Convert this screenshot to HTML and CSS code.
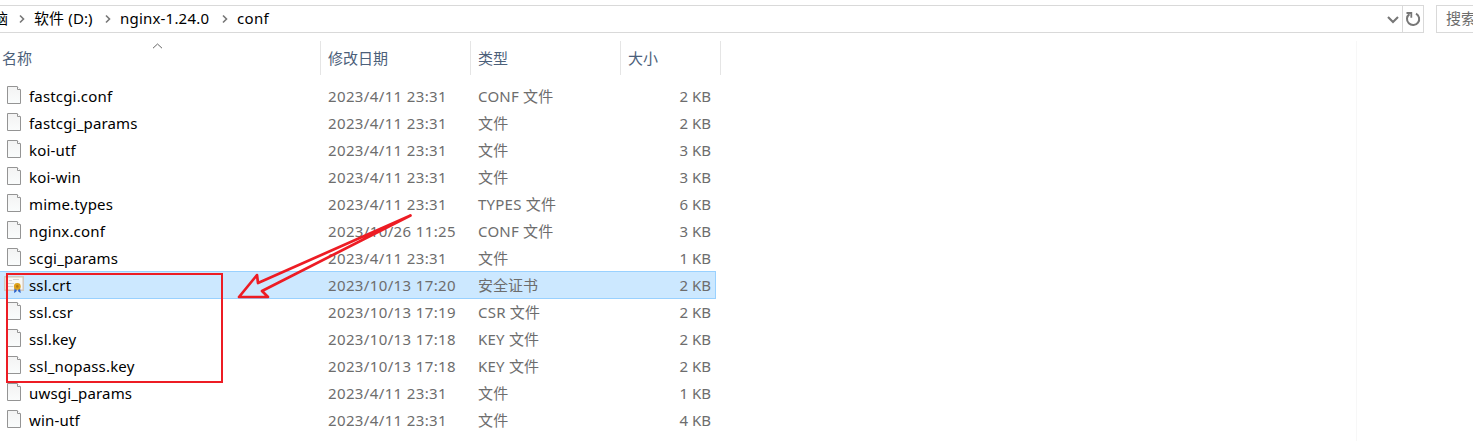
FILE: index.html
```html
<!DOCTYPE html>
<html lang="zh-CN">
<head>
<meta charset="utf-8">
<title>conf</title>
<link rel="stylesheet" href="styles.css">
</head>
<body>
<svg class="defs" width="0" height="0">
  <defs>
    <linearGradient id="paper" x2="0" y2="1"><stop offset="0" stop-color="#f3f3f3"/><stop offset="1" stop-color="#fafcfc"/></linearGradient>
    <symbol id="file" viewBox="0 0 16 20">
      <path d="M1.5 1.5H11L14.5 5V18.5H1.5Z" fill="url(#paper)" stroke="#949494"/>
      <path d="M11.5 1.5V4.5H14.5" fill="#fff" stroke="#949494"/>
    </symbol>
    <symbol id="cert" viewBox="0 0 20 20">
      <rect x=".8" y="2.8" width="18.4" height="13.4" fill="#f8f8f5" stroke="#d3c8bd" stroke-width="1.5"/>
      <path d="M5 6.5H8M9 5.5H15M4 9.5H10M4 12.5H9" stroke="#d0d3d5"/>
      <path d="M10.5 14L10 19L12.2 17.8L13.5 14.5ZM13.5 14.5L14.5 17.8L16.8 19L16 14Z" fill="#2f66cc"/>
      <circle cx="13.3" cy="12.4" r="3.4" fill="#dda119"/><circle cx="13.3" cy="12.4" r="1.3" fill="#b47a10"/>
    </symbol>
    <symbol id="chev" viewBox="0 0 8 10"><path d="M2 1.5L5.5 5L2 8.5" fill="none" stroke="#777" stroke-width="1.6"/></symbol>
  </defs>
</svg>
<div class="window">
  <header class="toolbar">
    <div class="address">
      <span class="crumb pc">脑</span><svg class="chev"><use href="#chev"/></svg>
      <span class="crumb drive">软件 (D:)</span><svg class="chev"><use href="#chev"/></svg>
      <span class="crumb dir">nginx-1.24.0</span><svg class="chev"><use href="#chev"/></svg>
      <span class="crumb last">conf</span>
      <svg class="drop" viewBox="0 0 14 10"><path d="M2 2L7 7L12 2" fill="none" stroke="#777" stroke-width="2.1"/></svg>
      <span class="refresh"><svg viewBox="0 0 16 16" width="16" height="16"><path d="M11 2.6A6.1 6.1 0 1 1 4.4 3.1" fill="none" stroke="#777" stroke-width="2"/><path d="M1.5 2H6.3V6.8" fill="none" stroke="#777" stroke-width="1.8"/></svg></span>
    </div>
    <div class="search">搜索</div>
  </header>
  <div class="head">
    <div class="h name">名称<svg class="sort" viewBox="0 0 11 6"><path d="M1 5.2L5.5 1L10 5.2" fill="none" stroke="#666"/></svg></div>
    <div class="h">修改日期</div><div class="h">类型</div><div class="h size">大小</div>
    <i class="pane"></i>
  </div>
  <main class="list">
    <div class="row"><svg class="icon"><use href="#file"/></svg><span class="file">fastcgi.conf</span><span class="date">2023/4/11 23:31</span><span class="type">CONF 文件</span><span class="kb">2 KB</span></div>
    <div class="row"><svg class="icon"><use href="#file"/></svg><span class="file">fastcgi_params</span><span class="date">2023/4/11 23:31</span><span class="type">文件</span><span class="kb">2 KB</span></div>
    <div class="row"><svg class="icon"><use href="#file"/></svg><span class="file">koi-utf</span><span class="date">2023/4/11 23:31</span><span class="type">文件</span><span class="kb">3 KB</span></div>
    <div class="row"><svg class="icon"><use href="#file"/></svg><span class="file">koi-win</span><span class="date">2023/4/11 23:31</span><span class="type">文件</span><span class="kb">3 KB</span></div>
    <div class="row"><svg class="icon"><use href="#file"/></svg><span class="file">mime.types</span><span class="date">2023/4/11 23:31</span><span class="type">TYPES 文件</span><span class="kb">6 KB</span></div>
    <div class="row"><svg class="icon"><use href="#file"/></svg><span class="file">nginx.conf</span><span class="date">2023/10/26 11:25</span><span class="type">CONF 文件</span><span class="kb">3 KB</span></div>
    <div class="row"><svg class="icon"><use href="#file"/></svg><span class="file">scgi_params</span><span class="date">2023/4/11 23:31</span><span class="type">文件</span><span class="kb">1 KB</span></div>
    <div class="row selected"><svg class="icon cert"><use href="#cert"/></svg><span class="file">ssl.crt</span><span class="date">2023/10/13 17:20</span><span class="type cjk">安全证书</span><span class="kb">2 KB</span></div>
    <div class="row"><svg class="icon"><use href="#file"/></svg><span class="file">ssl.csr</span><span class="date">2023/10/13 17:19</span><span class="type">CSR 文件</span><span class="kb">2 KB</span></div>
    <div class="row"><svg class="icon"><use href="#file"/></svg><span class="file">ssl.key</span><span class="date">2023/10/13 17:18</span><span class="type">KEY 文件</span><span class="kb">2 KB</span></div>
    <div class="row"><svg class="icon"><use href="#file"/></svg><span class="file">ssl_nopass.key</span><span class="date">2023/10/13 17:18</span><span class="type">KEY 文件</span><span class="kb">2 KB</span></div>
    <div class="row"><svg class="icon"><use href="#file"/></svg><span class="file">uwsgi_params</span><span class="date">2023/4/11 23:31</span><span class="type">文件</span><span class="kb">1 KB</span></div>
    <div class="row"><svg class="icon"><use href="#file"/></svg><span class="file">win-utf</span><span class="date">2023/4/11 23:31</span><span class="type">文件</span><span class="kb">4 KB</span></div>
  </main>
  <svg class="marks" viewBox="0 0 1473 441" fill="none" stroke="#ed1c24" stroke-width="2">
    <rect x="7" y="274" width="215" height="108"/>
    <path d="M410.5 215.5L258 283L257 275L239 297H268L262 291Z" stroke-width="2.7" stroke-linejoin="round"/>
  </svg>
</div>
</body>
</html>
```
FILE: styles.css
```css
* { box-sizing: border-box; }
body { margin: 0; background: #fff; font: 15px/20px "Noto Sans", "Noto Sans CJK SC", sans-serif; color: #000; }
.defs { position: absolute; }
.window { position: relative; width: 1473px; height: 441px; overflow: hidden; }
.toolbar { display: flex; gap: 12px; height: 33px; padding-top: 5px; }
.address { display: flex; align-items: center; flex: none; width: 1424px; height: 28px; border: 1px solid #d9d9d9; border-left: 0; }
.crumb { white-space: nowrap; flex: none; padding-bottom: 2px; }
.pc { margin-left: -7px; width: 16px; margin-right: 9px; }
.drive { width: 70px; letter-spacing: .12px; }
.dir { width: 101px; letter-spacing: .2px; }
.last { letter-spacing: .3px; }
.chev { width: 8px; height: 10px; margin-right: 8px; flex: none; }
.drop { width: 14px; height: 10px; margin: 2px 2px 0 auto; }
.refresh { display: flex; align-items: center; justify-content: center; width: 21px; height: 26px; border-left: 1px solid #d9d9d9; }
.search { width: 60px; height: 28px; flex: none; border: 1px solid #d9d9d9; padding: 2px 9px; color: #6d6d6d; }
.head { display: flex; height: 49px; padding-top: 8px; color: #4c607a; }
.h { position: relative; width: 150px; height: 34px; padding: 7px 7px; border-right: 1px solid #e5e5e5; }
.name { width: 321px; padding-left: 2px; }
.size { width: 100px; }
.sort { position: absolute; left: 152px; top: 2px; width: 11px; height: 6px; }
.pane { width: 1px; height: 400px; margin-left: 635px; background: #f7f7f7; }
.list { width: 716px; }
.row { display: grid; grid-template-columns: 29px 299px 150px 150px 83px; height: 27px; line-height: 28px; color: #6d6d6d; white-space: nowrap; }
.file { color: #000; letter-spacing: .17px; }
.date { letter-spacing: .37px; }
.type { letter-spacing: .22px; }
.cjk { letter-spacing: 0; }
.kb { text-align: right; }
.icon { width: 16px; height: 20px; margin: 3px 0 0 6px; }
.cert { width: 20px; margin-left: 4px; }
.selected { height: 28px; margin-bottom: -1px; background: #cce8ff; box-shadow: inset 0 1px #99d1ff, inset 0 -1px #99d1ff, inset -1px 0 #99d1ff; }
.marks { position: absolute; inset: 0; width: 1473px; height: 441px; }
```
